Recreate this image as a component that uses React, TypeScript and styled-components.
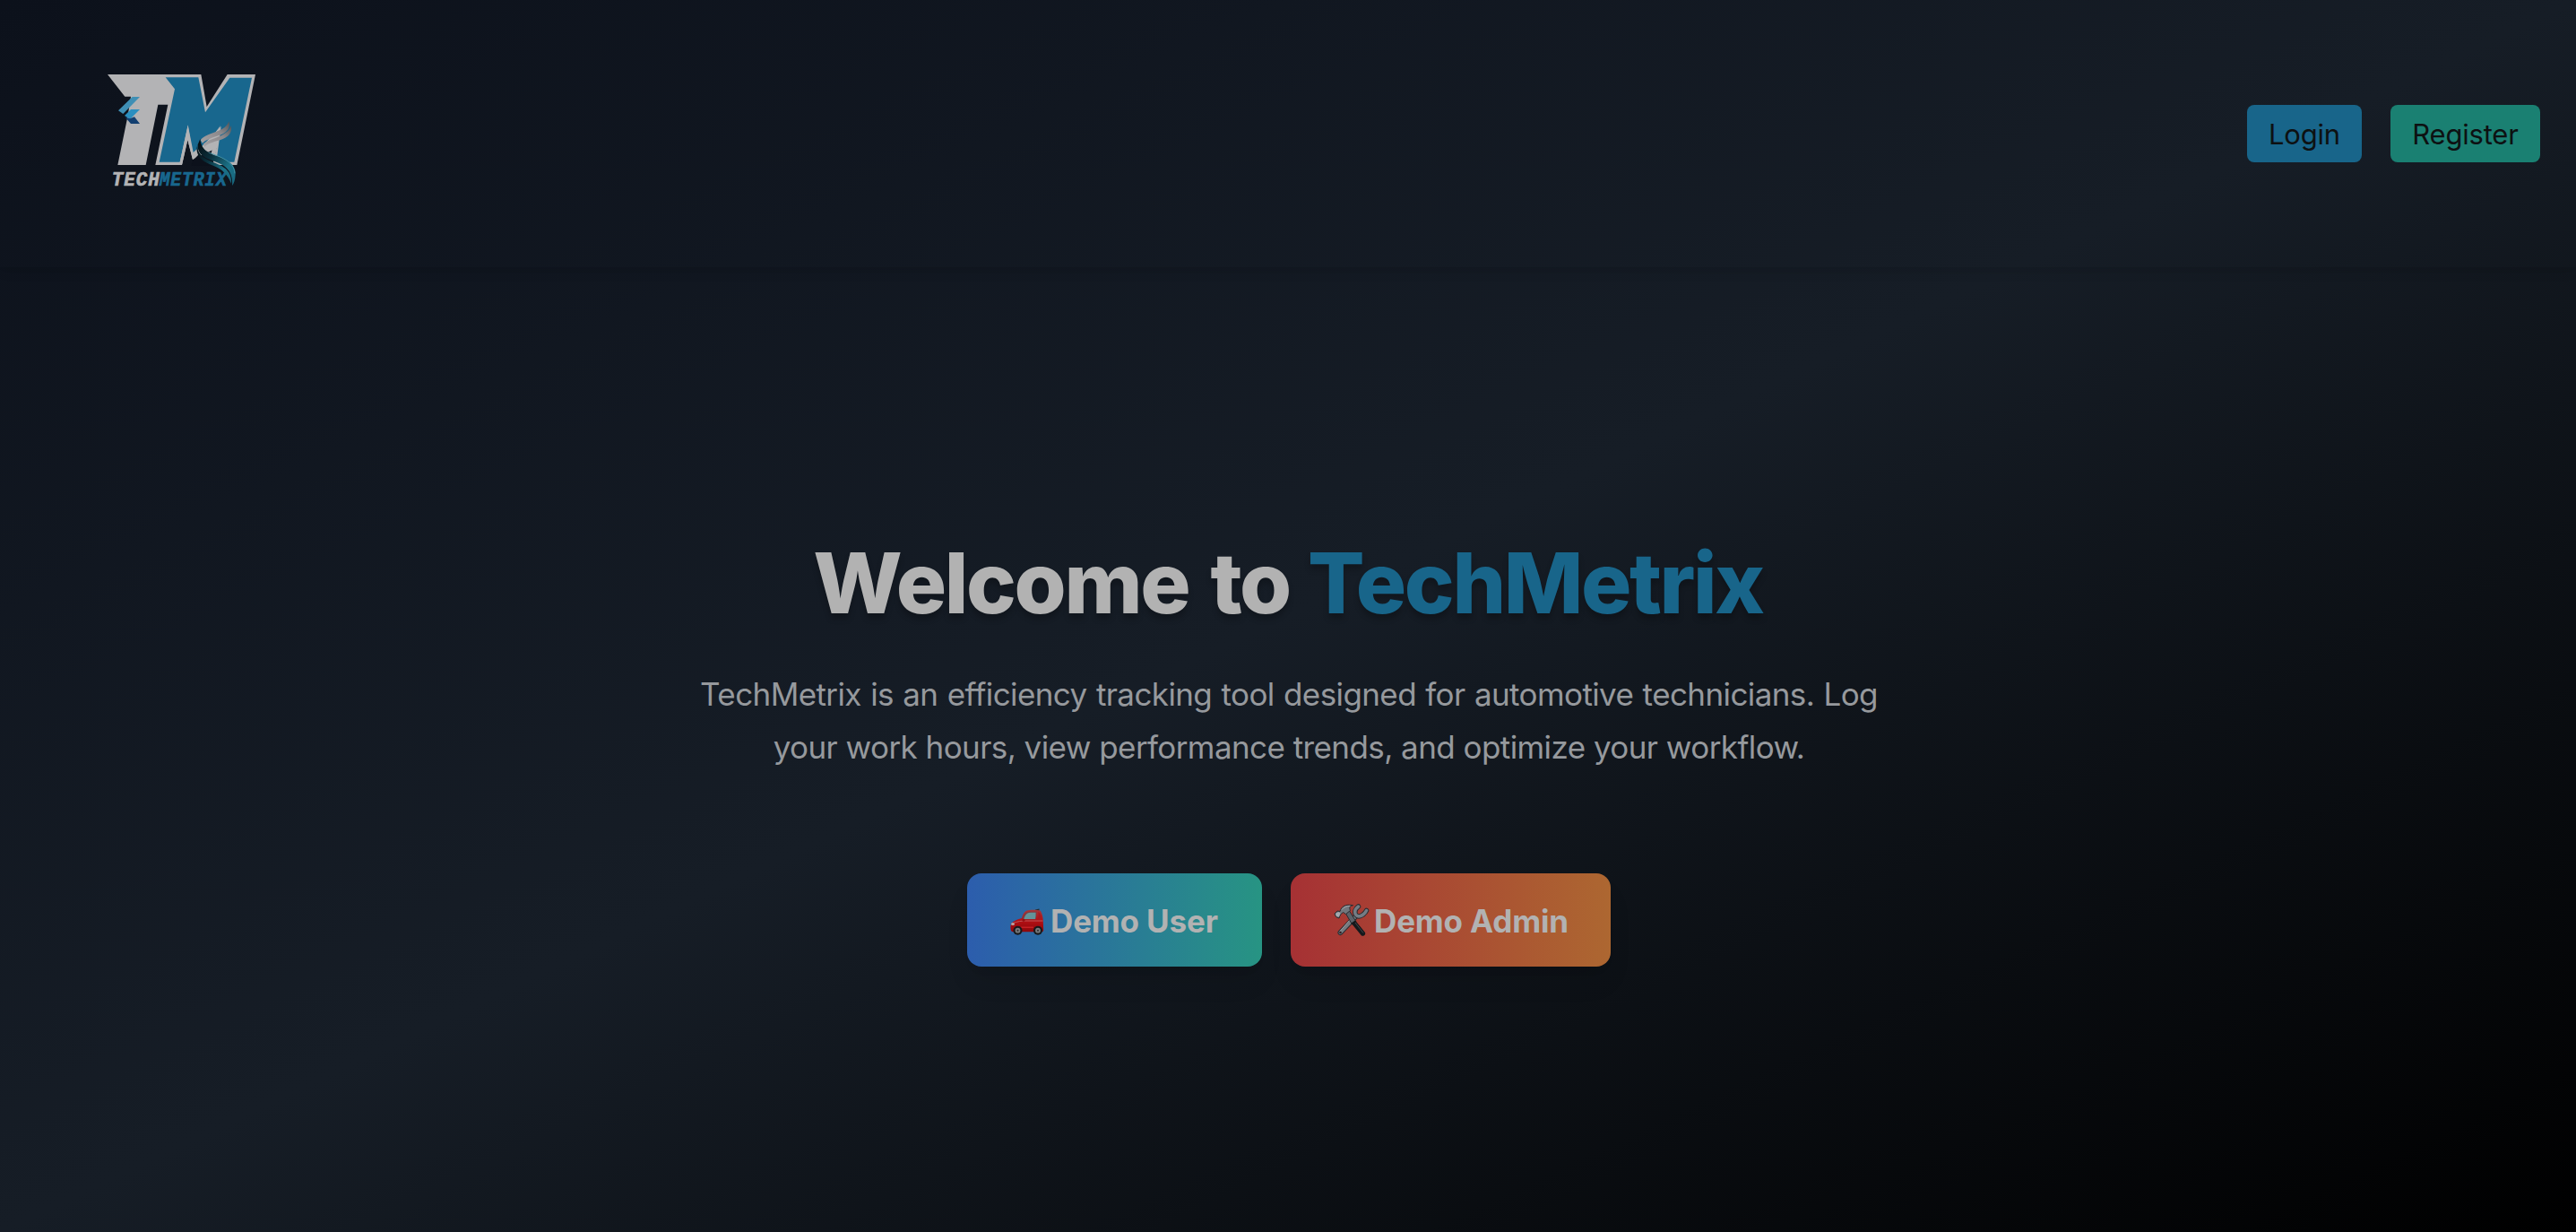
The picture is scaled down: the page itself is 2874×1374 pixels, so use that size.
import React from "react";
import styled, { createGlobalStyle } from "styled-components";

const GlobalStyle = createGlobalStyle`
  *, *::before, *::after { box-sizing: border-box; }
  body {
    margin: 0;
    background: #000;
    font-family: Inter, "Liberation Sans", sans-serif;
    -webkit-font-smoothing: antialiased;
  }
`;

const Page = styled.div`
  display: flex;
  flex-direction: column;
  min-height: 100vh;
  background: linear-gradient(to bottom right, #0c111b, #161d26 50%, #000);
`;

const Navbar = styled.header`
  display: flex;
  align-items: center;
  justify-content: space-between;
  height: 298px;
  padding: 0 40px 0 100px;
  box-shadow: 0 8px 12px -2px rgba(0, 0, 0, 0.07), 0 4px 8px -4px rgba(0, 0, 0, 0.07);
`;

const LogoLink = styled.a`
  display: block;
  width: 200px;
  height: 160px;
  margin-top: -18px;

  svg {
    display: block;
    width: 100%;
    height: 100%;
  }
`;

const LogoText = styled.text`
  font-family: "Liberation Mono", monospace;
  font-style: italic;
  font-weight: 700;
  font-size: 64px;
  letter-spacing: 3px;
  stroke-width: 2;
`;

const NavActions = styled.nav`
  display: flex;
  gap: 32px;
`;

const NavButton = styled.button<{ $color: string; $width: number }>`
  width: ${(p) => p.$width}px;
  height: 64px;
  padding: 1px 0 0;
  border: 0;
  border-radius: 8px;
  background: ${(p) => p.$color};
  color: #0d1112;
  font-family: inherit;
  font-size: 31px;
  line-height: 63px;
  letter-spacing: -0.2px;
`;

const Hero = styled.main`
  display: flex;
  flex: 1;
  flex-direction: column;
  align-items: center;
  padding-top: 304px;
  text-align: center;
`;

const Title = styled.h1`
  margin: 0;
  color: #b2b2b2;
  font-size: 94px;
  font-weight: 800;
  line-height: 96px;
  letter-spacing: -2.4px;
  word-spacing: 6px;
  text-shadow: 0 6px 6px rgba(0, 0, 0, 0.22);
`;

const Brand = styled.span`
  margin-left: -4px;
  color: #18658a;
`;

const Lead = styled.p`
  margin: 47px 0 0 2px;
  color: #96999d;
  font-size: 35px;
  font-weight: 400;
  line-height: 58.5px;
  letter-spacing: -0.6px;
`;

const LeadLine = styled.span<{ $wordGap: number }>`
  display: block;
  word-spacing: ${(p) => p.$wordGap}px;
`;

const DemoActions = styled.div`
  display: flex;
  gap: 32px;
  margin: 112px 0 0 2px;
`;

const DemoButton = styled.button<{ $from: string; $to: string; $width: number }>`
  display: flex;
  align-items: center;
  gap: 5px;
  width: ${(p) => p.$width}px;
  height: 104px;
  padding: 2px 0 0 46px;
  border: 0;
  border-radius: 16px;
  background: linear-gradient(to right, ${(p) => p.$from}, ${(p) => p.$to});
  box-shadow: 0 20px 30px -6px rgba(0, 0, 0, 0.1), 0 8px 12px -8px rgba(0, 0, 0, 0.1);
  color: #b2b2b2;
  font-family: inherit;
  font-size: 35px;
  font-weight: 650;
  line-height: 56px;
  letter-spacing: -0.15px;
  white-space: nowrap;

  svg {
    flex: none;
    width: 42px;
    height: 42px;
  }
`;

const Logo = () => (
  <svg viewBox="0 0 600 480" aria-label="TechMetrix">
    <defs>
      <linearGradient id="silver" x1="0" x2="1" y1="1" y2="0">
        <stop offset="0" stopColor="#a5a2a4" />
        <stop offset="0.6" stopColor="#8b888b" />
        <stop offset="1" stopColor="#4f5257" />
      </linearGradient>
      <linearGradient id="wing" x1="0" x2="1" y1="0" y2="1">
        <stop offset="0" stopColor="#05090d" />
        <stop offset="0.35" stopColor="#0a2e3a" />
        <stop offset="0.7" stopColor="#1b7288" />
        <stop offset="1" stopColor="#17647c" />
      </linearGradient>
    </defs>
    <path
      fill="#b3b3b5"
      d="M60 69H373L392 177L461 69H555L493 372H412L424 316L345 354L328 288L309 372H220L262 170H229L188 372H94L128 206L138 143H118Z"
    />
    <path
      fill="#18678e"
      d="M254 79H364L387 196L469 80H543L484 362H424L440 243L346 340L329 240L302 362H233L285 118Z"
    />
    <path fill="#b3b3b5" d="M329 238L347 330L360 318V334L345 354L328 288L309 372H300Z" />
    <path fill="#b3b3b5" d="M438 240L430 262H422Z" />
    <path fill="#0c111b" d="M346 356L366 336L412 368V374H340Z" />
    <path fill="#b3b3b5" d="M412 312L426 308L420 345H404Z" />
    <path fill="#3f8fb5" d="M143 144H168L112 201L96 190Z" />
    <path fill="#2a8fc0" d="M138 186H168L135 219L117 207Z" />
    <path fill="#123f70" d="M135 217L150 211L168 234H138L119 212Z" />
    <LogoText x="74" y="440" fill="#b3b3b5" stroke="#b3b3b5" textLength="162" lengthAdjust="spacingAndGlyphs">
      TECH
    </LogoText>
    <LogoText x="233" y="440" fill="#18678e" stroke="#18678e" textLength="228" lengthAdjust="spacingAndGlyphs">
      METRIX
    </LogoText>
    <path
      fill="url(#silver)"
      d="M371 289C384 268 430 263 452 246C460 239 464 233 466 226C472 246 462 262 436 272C410 281 388 287 378 299Z"
    />
    <path
      fill="url(#silver)"
      d="M380 303C392 288 430 282 450 268C462 260 470 252 473 240C479 266 462 281 436 289C412 296 394 300 386 311Z"
    />
    <path
      fill="url(#wing)"
      d="M370 285C374 326 404 334 438 346C470 358 490 378 488 404C487 422 483 434 477 441C481 398 458 374 424 362C392 350 360 340 362 304Z"
    />
    <path
      fill="url(#wing)"
      d="M360 308C362 342 392 354 422 366C456 380 476 396 474 434C462 402 440 384 414 374C378 362 352 340 360 308Z"
    />
    <path fill="none" stroke="#4a9aac" strokeWidth="2.500" d="M398 330C440 346 482 358 486 400" />
  </svg>
);

const CarIcon = () => (
  <svg viewBox="0 0 42 42" aria-hidden="true">
    <defs>
      <linearGradient id="carBody" x1="0" x2="0" y1="0" y2="1">
        <stop offset="0" stopColor="#a8383a" />
        <stop offset="0.5" stopColor="#b30f14" />
        <stop offset="1" stopColor="#8c080c" />
      </linearGradient>
    </defs>
    <path d="M30 8.600L34.500 7.400V9.500L30 10Z" fill="#252a30" />
    <path
      d="M15 18C16.500 13 18.500 9.500 22 9.200C27 8.400 32 8.600 35.500 9.600C37.500 12 38.500 16 38.700 20L39.200 31.500C39 33 38 33.200 36 33.200H5C3 33 2.200 31 2.500 27C2.800 22 8 20 15 18Z"
      fill="url(#carBody)"
    />
    <path d="M16 18.200C17.500 14 19 11.300 22.500 11C25 10.600 28.500 10.500 31.500 10.800C31.500 13 31.300 16 30.800 19.300H17.500Z" fill="#7b3d43" />
    <path d="M17.500 18.300C18.700 15 20.300 12.600 22.700 12.100C25.500 11.600 28.200 11.600 30.600 11.800C30.600 14.500 30.500 16.500 30 18.900H17.500Z" fill="#63949a" />
    <path d="M33.500 11C36 13 37 16 37 19.500H33.500Z" fill="#a61a20" />
    <path d="M4 24C10 21.500 15 21 20 21H38.500" stroke="#bd5556" strokeWidth="1" fill="none" />
    <path d="M14 28.200H28" stroke="#cf2529" strokeWidth="1.200" fill="none" />
    <ellipse cx="5" cy="24.500" rx="2" ry="1.500" fill="#b9a6a3" />
    <circle cx="17" cy="20.300" r="1.500" fill="#941014" />
    <circle cx="10.500" cy="31.700" r="5" fill="#17191c" />
    <circle cx="33" cy="31.700" r="5" fill="#17191c" />
    <circle cx="10.500" cy="31.700" r="2.900" fill="#77797c" />
    <circle cx="33" cy="31.700" r="2.900" fill="#77797c" />
    <circle cx="10.500" cy="31.700" r="1" fill="#2b2d30" />
    <circle cx="33" cy="31.700" r="1" fill="#2b2d30" />
  </svg>
);

const ToolsIcon = () => (
  <svg viewBox="0 0 42 42" aria-hidden="true">
    <g strokeLinecap="round" strokeLinejoin="round" fill="none">
      <path d="M27 15.500L9.500 34" stroke="#2a2c30" strokeWidth="6" />
      <path d="M27 15.500L9.500 34" stroke="#767b81" strokeWidth="4" />
      <path d="M20 20L9.500 32" stroke="#9a9da1" strokeWidth="1" />
      <path d="M29.500 5C26 7.500 25 11 26.500 14C29 17.500 35 16 38.500 9.500" stroke="#2a2c30" strokeWidth="5.500" />
      <path d="M29.500 5C26 7.500 25 11 26.500 14C29 17.500 35 16 38.500 9.500" stroke="#747c84" strokeWidth="3.500" />
    </g>
    <circle cx="9.500" cy="34" r="1.300" fill="#341d20" />
    <path d="M15 12L19.500 10L27 22L22.500 25Z" fill="#5d6269" stroke="#2a2c30" />
    <path d="M21.500 23.500L26 20.500L37 34C38 36.500 35.500 38.500 33 37.500Z" fill="#15181b" />
    <path d="M26 23L35 34.500" stroke="#41464b" strokeWidth="1" />
    <path
      d="M3 13L6 10L9 10.500C10.500 5 15 2 23.500 3.700C20 4.500 19 6 20.500 9.500L15.500 13.500L12.500 11.500L9.500 14L8 18L4.500 16.500Z"
      fill="#72777d"
      stroke="#292b30"
      strokeWidth="1"
    />
    <path d="M4 13L7.500 11L9.500 12.500L8 16.500L5 16Z" fill="#a6abb0" />
    <path d="M11 8.500C13.500 5.500 16 4.500 20 4.300" stroke="#a6a9ad" strokeWidth="1" fill="none" />
  </svg>
);

export default function App() {
  return (
    <>
      <GlobalStyle />
      <Page>
        <Navbar>
          <LogoLink>
            <Logo />
          </LogoLink>
          <NavActions>
            <NavButton $color="#18658a" $width={128}>Login</NavButton>
            <NavButton $color="#1a8072" $width={167}>Register</NavButton>
          </NavActions>
        </Navbar>
        <Hero>
          <Title>
            Welcome to <Brand>TechMetrix</Brand>
          </Title>
          <Lead>
            <LeadLine $wordGap={1.07}>
              TechMetrix is an efficiency tracking tool designed for automotive technicians. Log
            </LeadLine>
            <LeadLine $wordGap={0.24}>
              your work hours, view performance trends, and optimize your workflow.
            </LeadLine>
          </Lead>
          <DemoActions>
            <DemoButton $from="#2c5dad" $to="#279483" $width={329}>
              <CarIcon />
              Demo User
            </DemoButton>
            <DemoButton $from="#a63134" $to="#ad6731" $width={357}>
              <ToolsIcon />
              Demo Admin
            </DemoButton>
          </DemoActions>
        </Hero>
      </Page>
    </>
  );
}
